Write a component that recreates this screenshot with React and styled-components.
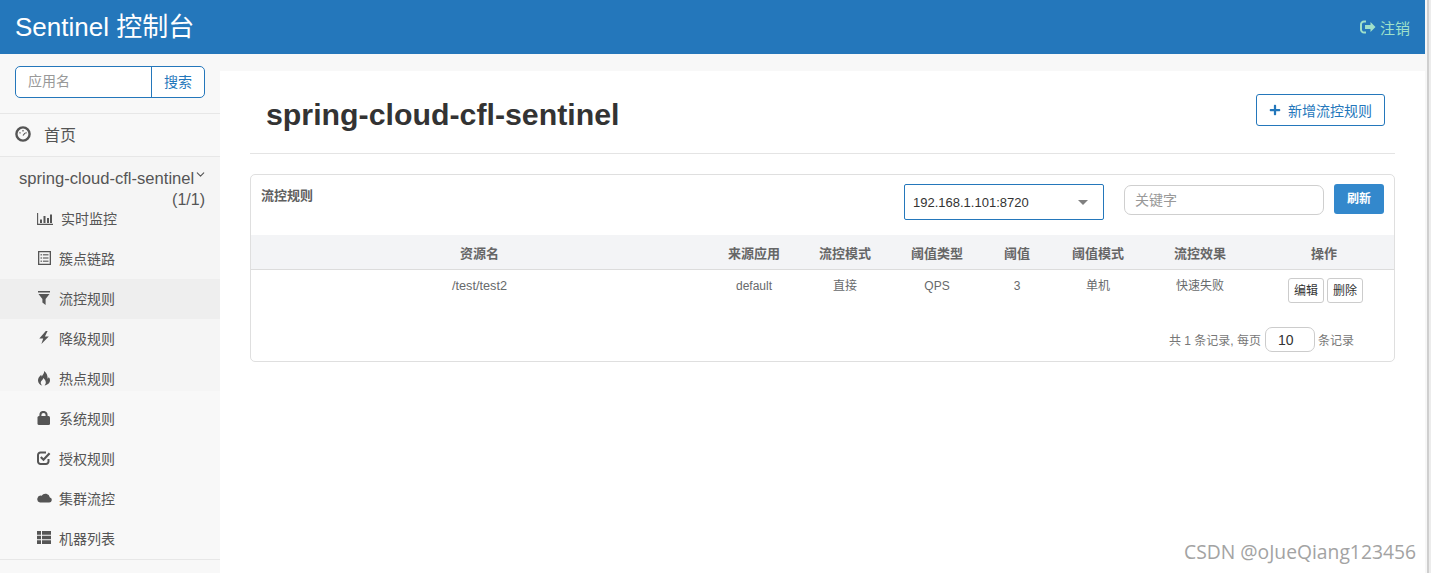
import React from 'react';
import styled, { createGlobalStyle } from 'styled-components';
import { FaPlus } from 'react-icons/fa';
import { FiChevronDown } from 'react-icons/fi';

const FONT = '"Liberation Sans", "Noto Sans CJK SC", sans-serif';

const GlobalStyle = createGlobalStyle`
  html, body { margin: 0; padding: 0; height: 100%; overflow: hidden; background: #fff; }
  body { font-family: ${FONT}; color: #676a6c; }
  * { box-sizing: border-box; }
`;

const Page = styled.div`
  width: 1431px;
  height: 573px;
  position: relative;
  display: flex;
  overflow: hidden;
`;

const Main = styled.div`
  width: 1425px;
  display: flex;
  flex-direction: column;
`;

const ScrollEdge = styled.div`
  width: 6px;
  background: linear-gradient(90deg, #f7f7f7 0 2px, #cfcfcf 2px 4px, #ececec 4px 6px);
`;

const Header = styled.header`
  height: 54px;
  background: #2477bb;
  display: flex;
  align-items: center;
  justify-content: space-between;
  padding: 0 15px;
  flex-shrink: 0;
`;

const Brand = styled.div`
  color: #fff;
  font-size: 26px;
  padding-bottom: 5px;
`;

const Logout = styled.div`
  display: flex;
  align-items: center;
  gap: 4px;
  color: #9fe0ca;
  font-size: 15px;
`;

const Body = styled.div`
  flex: 1;
  display: flex;
  min-height: 0;
`;

const Sidebar = styled.aside`
  width: 220px;
  background: #f8f8f8;
  flex-shrink: 0;
`;

const SearchWrap = styled.div`
  height: 60px;
  padding: 12px 15px 0;
  border-bottom: 1px solid #e7e7e7;
`;

const SearchBox = styled.div`
  display: flex;
  height: 32px;
  background: #fff;
  border: 1px solid #2477bb;
  border-radius: 5px;
`;

const SearchInput = styled.div`
  flex: 1;
  padding-left: 12px;
  line-height: 28px;
  font-size: 14px;
  color: #999;
`;

const SearchButton = styled.div`
  width: 53px;
  border-left: 1px solid #2477bb;
  color: #2477bb;
  font-size: 14px;
  text-align: center;
  line-height: 31px;
`;

const HomeLink = styled.div`
  height: 43px;
  display: flex;
  align-items: center;
  gap: 13px;
  padding: 0 0 2px 15px;
  font-size: 16px;
  color: #555;
  border-bottom: 1px solid #e7e7e7;
`;

const AppBlock = styled.div`
  padding-top: 11px;
  border-bottom: 1px solid #e7e7e7;
  /* the tinted part of the open group stops short of its last rows */
  background: linear-gradient(#f5f5f5 0 234px, transparent 234px);
`;

const AppName = styled.div`
  display: flex;
  align-items: flex-start;
  padding-left: 19px;
  font-size: 16.6px;
  line-height: 22px;
  color: #555;

  svg { margin-top: 0; }
`;

const AppCount = styled.div`
  text-align: right;
  padding-right: 15px;
  font-size: 16px;
  line-height: 20px;
  height: 9px;
  color: #555;
`;

const NavItem = styled.div`
  height: 40px;
  display: flex;
  align-items: center;
  padding: 0 0 2px 37px;
  font-size: 14px;
  color: #555;
  background: ${(p) => (p.$active ? '#eeeeee' : 'transparent')};
`;

const NavIcon = styled.span`
  width: ${(p) => p.$w || 22}px;
  display: flex;
  align-items: center;
  margin-top: 2px;
  color: #555;
`;

const Content = styled.main`
  flex: 1;
  background: #f8f8f8;
  padding-top: 17px;
  min-width: 0;
`;

const ContentInner = styled.div`
  background: #fff;
  height: 100%;
  padding: 0 30px;
`;

const TitleRow = styled.div`
  height: 83px;
  display: flex;
  align-items: flex-start;
  justify-content: space-between;
  border-bottom: 1px solid #e4e4e4;
  padding: 0 10px 0 16px;
`;

const Title = styled.h1`
  margin: 26px 0 0;
  font-size: 30.3px;
  line-height: 36px;
  font-weight: 700;
  color: #333;
`;

const AddButton = styled.div`
  margin-top: 23px;
  width: 129px;
  height: 32px;
  display: flex;
  align-items: center;
  justify-content: center;
  gap: 7px;
  border: 1px solid #2477bb;
  border-radius: 3px;
  color: #2477bb;
  font-size: 14px;
`;

const Panel = styled.section`
  margin-top: 20px;
  border: 1px solid #dfdfdf;
  border-radius: 5px;
  height: 188px;
  width: 1145px;
`;

const PanelTop = styled.div`
  height: 60px;
  display: flex;
  align-items: flex-start;
  padding: 9px 10px 0;
`;

const PanelTitle = styled.div`
  flex: 1;
  font-size: 13px;
  font-weight: 700;
  line-height: 24px;
  color: #5f5f5f;
`;

const HostSelect = styled.div`
  width: 200px;
  height: 36px;
  display: flex;
  align-items: center;
  justify-content: space-between;
  padding: 0 15px 0 8px;
  border: 1px solid #2477bb;
  border-radius: 2px;
  font-size: 13px;
  color: #333;
`;

const Caret = styled.span`
  width: 0;
  height: 0;
  border-left: 5px solid transparent;
  border-right: 5px solid transparent;
  border-top: 5px solid #808080;
`;

const KeywordInput = styled.div`
  width: 200px;
  height: 30px;
  margin: 1px 0 0 20px;
  padding-left: 10px;
  border: 1px solid #cfcfcf;
  border-radius: 7px;
  font-size: 14px;
  line-height: 28px;
  color: #999;
`;

const RefreshButton = styled.div`
  width: 50px;
  height: 30px;
  margin-left: 10px;
  background: #3388cc;
  border-radius: 3px;
  color: #fff;
  font-size: 12px;
  font-weight: 700;
  text-align: center;
  line-height: 30px;
`;

const Cols = '457px 92px 90px 94px 66px 96px 108px 140px';

const HeadRow = styled.div`
  display: grid;
  grid-template-columns: ${Cols};
  height: 35px;
  align-items: center;
  background: #f3f4f6;
  border-bottom: 1px solid #dcdcdc;
  font-size: 13px;
  font-weight: 700;
  color: #666;
  text-align: center;
`;

const DataRow = styled.div`
  display: grid;
  grid-template-columns: ${Cols};
  height: 50px;
  padding-top: 7px;
  font-size: 12px;
  line-height: 18px;
  color: #676a6c;
  text-align: center;
`;

const ResourceCell = styled.div`
  font-size: 12.7px;
`;

const RowActions = styled.div`
  display: flex;
  justify-content: center;
  gap: 3px;
  margin: 1px 0 0 3px;
`;

const SmallButton = styled.div`
  width: 36px;
  height: 25px;
  border: 1px solid #ccc;
  border-radius: 3px;
  font-size: 12px;
  line-height: 24px;
  color: #333;
`;

const Pager = styled.div`
  display: flex;
  align-items: center;
  justify-content: flex-end;
  height: 25px;
  padding-right: 40px;
  margin-top: 7px;
  font-size: 12px;
  color: #777;
`;

const PageSize = styled.div`
  width: 50px;
  height: 25px;
  margin: 0 3px 0 4px;
  padding-left: 12px;
  border: 1px solid #ccc;
  border-radius: 7px;
  font-size: 14px;
  line-height: 25px;
  color: #333;
`;

const Watermark = styled.div`
  position: absolute;
  right: 15px;
  bottom: 8px;
  font-family: "Open Sans", "Noto Sans", sans-serif;
  font-size: 19.3px;
  color: #a3a3a3;
`;

const Glyph = ({ children, w = 16, h = 16 }) => (
  <svg width={w} height={h} viewBox={`0 0 ${w} ${h}`} fill="currentColor" style={{ display: 'block' }}>
    {children}
  </svg>
);

const LogoutIcon = () => (
  <Glyph h={14}>
    <path d="M6 1.5H4A3 3 0 0 0 1 4.5v5a3 3 0 0 0 3 3h2" stroke="currentColor" strokeWidth="2" fill="none" />
    <path d="M5 5h5.5V2L15.5 7l-5 5V9H5z" />
  </Glyph>
);

const GaugeIcon = () => (
  <Glyph>
    <circle cx="8" cy="8" r="6.6" fill="none" stroke="currentColor" strokeWidth="2.4" />
    <path d="M8 4v1.4M4.5 6.5l1 .7M11.5 6.5l-1 .7M8 9.5l2-2.5" stroke="currentColor" strokeWidth="1.2" fill="none" />
  </Glyph>
);

const BarsIcon = () => (
  <Glyph>
    <path d="M.6 2v11.4H16" stroke="currentColor" strokeWidth="1.1" fill="none" />
    <path d="M3 8.5h2v3.5H3zM6.5 5h2v7h-2zM10 7h2v5h-2zM13 3.5h2V12h-2z" />
  </Glyph>
);

const ListAltIcon = () => (
  <Glyph>
    <path fillRule="evenodd" d="M1 0h13v14H1zM2.3 1.3v11.4h10.4V1.3z" />
    <path d="M3.5 3h1.6v1.4H3.5zM6 3h5.5v1.4H6zM3.5 6.3h1.6v1.4H3.5zM6 6.3h5.5v1.4H6zM3.5 9.6h1.6V11H3.5zM6 9.6h5.5V11H6z" opacity="0.75" />
  </Glyph>
);

const FilterIcon = () => (
  <Glyph>
    <path d="M1 0h12v1.5H1zM1.5 3h11L8.6 8v6L5.4 11.6V8z" />
  </Glyph>
);

const BoltIcon = () => (
  <Glyph>
    <path d="M8.8 0 2.3 7.6h3.9L4.4 13l7.4-7.6H7.9L10.6 0z" />
  </Glyph>
);

const FlameIcon = () => (
  <Glyph>
    <path d="M7 0C7.6 2.5 5.5 3.8 4.8 5.6 4.4 4.9 4.2 4.4 4.2 3.8 2 5.6 1 7.6 1 9.4 1 12 3 14 5.2 14.4 3.8 13.4 3.4 12 4 10.6 4.6 9.4 6 8.8 6.2 7 7.6 8 9 10 8.8 11.8 8.7 13 8.2 13.8 7.6 14.4 10.6 14 13 12 13 9.2 13 7.8 12.4 6.8 11.6 6 11.6 6.8 11.2 7.4 10.6 7.6 10.8 4.6 9.6 1.8 7 0Z" />
  </Glyph>
);

const LockIcon = () => (
  <Glyph>
    <path d="M3.4 5.5V4a3.1 3.1 0 0 1 6.2 0v1.5" fill="none" stroke="currentColor" strokeWidth="2" />
    <rect x="0.5" y="5" width="12.5" height="9" rx="1.5" />
  </Glyph>
);

const CheckIcon = () => (
  <Glyph>
    <path d="M11.5 8v2.5a2.5 2.5 0 0 1-2.5 2.5H3.5A2.5 2.5 0 0 1 1 10.5V4a2.5 2.5 0 0 1 2.5-2.5H9" fill="none" stroke="currentColor" strokeWidth="2" />
    <path d="M3.8 6 6.5 8.7 12.6 2.2" fill="none" stroke="currentColor" strokeWidth="2.2" />
  </Glyph>
);

const CloudIcon = () => (
  <Glyph>
    <path d="M3 13h9.2a2.6 2.6 0 0 0 .7-5.1A4.6 4.6 0 0 0 4.6 6.2 3.4 3.4 0 0 0 3 13z" transform="translate(0 -1.5)" />
  </Glyph>
);

const ThListIcon = () => (
  <Glyph>
    <path d="M0 0h4v3.7H0zM5 0h9v3.7H5zM0 4.7h4v3.6H0zM5 4.7h9v3.6H5zM0 9.3h4V13H0zM5 9.3h9V13H5z" />
  </Glyph>
);

const NAV = [
  { label: '实时监控', icon: <BarsIcon />, w: 24 },
  { label: '簇点链路', icon: <ListAltIcon /> },
  { label: '流控规则', icon: <FilterIcon />, active: true },
  { label: '降级规则', icon: <BoltIcon /> },
  { label: '热点规则', icon: <FlameIcon /> },
  { label: '系统规则', icon: <LockIcon /> },
  { label: '授权规则', icon: <CheckIcon /> },
  { label: '集群流控', icon: <CloudIcon /> },
  { label: '机器列表', icon: <ThListIcon /> },
];

const App = () => {
  return (
    <Page>
      <GlobalStyle />
      <Main>
        <Header>
          <Brand>Sentinel 控制台</Brand>
          <Logout>
            <LogoutIcon />
            注销
          </Logout>
        </Header>
        <Body>
          <Sidebar>
            <SearchWrap>
              <SearchBox>
                <SearchInput>应用名</SearchInput>
                <SearchButton>搜索</SearchButton>
              </SearchBox>
            </SearchWrap>
            <HomeLink>
              <GaugeIcon />
              首页
            </HomeLink>
            <AppBlock>
              <AppName>
                spring-cloud-cfl-sentinel
                <FiChevronDown size={13} />
              </AppName>
              <AppCount>(1/1)</AppCount>
              {NAV.map((item) => (
                <NavItem key={item.label} $active={item.active}>
                  <NavIcon $w={item.w}>{item.icon}</NavIcon>
                  {item.label}
                </NavItem>
              ))}
            </AppBlock>
          </Sidebar>
          <Content>
            <ContentInner>
              <TitleRow>
                <Title>spring-cloud-cfl-sentinel</Title>
                <AddButton>
                  <FaPlus size={12} />
                  新增流控规则
                </AddButton>
              </TitleRow>
              <Panel>
                <PanelTop>
                  <PanelTitle>流控规则</PanelTitle>
                  <HostSelect>
                    192.168.1.101:8720
                    <Caret />
                  </HostSelect>
                  <KeywordInput>关键字</KeywordInput>
                  <RefreshButton>刷新</RefreshButton>
                </PanelTop>
                <HeadRow>
                  <div>资源名</div>
                  <div>来源应用</div>
                  <div>流控模式</div>
                  <div>阈值类型</div>
                  <div>阈值</div>
                  <div>阈值模式</div>
                  <div>流控效果</div>
                  <div>操作</div>
                </HeadRow>
                <DataRow>
                  <ResourceCell>/test/test2</ResourceCell>
                  <div>default</div>
                  <div>直接</div>
                  <div>QPS</div>
                  <div>3</div>
                  <div>单机</div>
                  <div>快速失败</div>
                  <RowActions>
                    <SmallButton>编辑</SmallButton>
                    <SmallButton>删除</SmallButton>
                  </RowActions>
                </DataRow>
                <Pager>
                  共 1 条记录, 每页
                  <PageSize>10</PageSize>
                  条记录
                </Pager>
              </Panel>
            </ContentInner>
          </Content>
        </Body>
      </Main>
      <ScrollEdge />
      <Watermark>CSDN @oJueQiang123456</Watermark>
    </Page>
  );
};

export default App;
